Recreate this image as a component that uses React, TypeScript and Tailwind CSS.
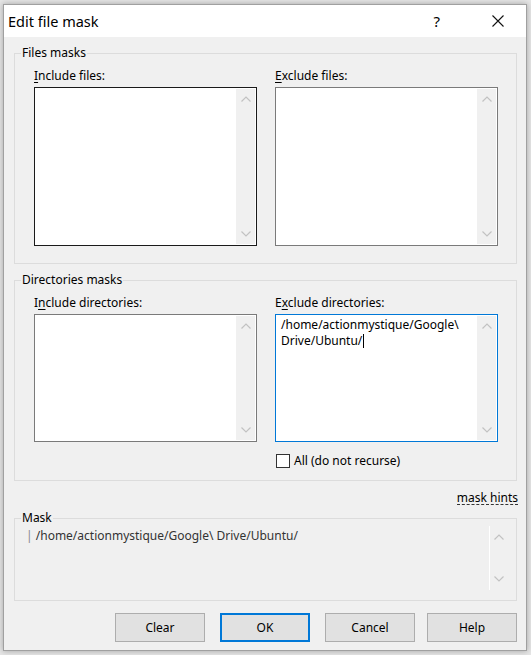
import type { ReactNode } from 'react'

const font = { fontFamily: '"Noto Sans", "Open Sans", Arial, sans-serif' }

function Chevron({ up }: { up?: boolean }) {
  return (
    <svg width="10" height="6" viewBox="0 0 10 6" fill="none" stroke="#c2c2c2" strokeWidth="1.2">
      <polyline points={up ? '0.5,5.5 5,1 9.5,5.5' : '0.5,0.5 5,5 9.5,0.5'} />
    </svg>
  )
}

function VScroll() {
  return (
    <div className="w-[19px] bg-[#f0f0f0] my-px mr-px flex flex-col items-center justify-between py-[7px]">
      <Chevron up />
      <Chevron />
    </div>
  )
}

interface ListBoxProps {
  label: ReactNode
  height: string
  border: string
  children?: ReactNode
}

function ListBox({ label, height, border, children }: ListBoxProps) {
  return (
    <div className="flex flex-col">
      <div className="h-[16px] leading-[16px] mb-[3px]">{label}</div>
      <div className={`${height} ${border} bg-white flex`}>
        <div className="flex-1 pl-[5px] pt-[2px] leading-[16px] text-black">{children}</div>
        <VScroll />
      </div>
    </div>
  )
}

function Group({ title, children, className }: { title: string; children: ReactNode; className?: string }) {
  return (
    <fieldset className={`w-[503px] border border-[#dcdcdc] ${className ?? ''}`}>
      <legend className="ml-[6px] px-px h-[16px] leading-[16px]">{title}</legend>
      {children}
    </fieldset>
  )
}

function Btn({ children, primary, className }: { children: ReactNode; primary?: boolean; className?: string }) {
  return (
    <button
      className={`w-[90px] h-[29px] bg-[#e1e1e1] text-black leading-none ${
        primary ? 'border-2 border-[#0078d7]' : 'border border-[#adadad]'
      } ${className ?? ''}`}
    >
      {children}
    </button>
  )
}

export default function App() {
  return (
    <div className="w-[531px] h-[655px] overflow-hidden bg-[#e6e6e6] pt-[4px] pl-[3px] text-[12px] text-black" style={font}>
      <div className="w-[524px] h-[647px] bg-[#f0f0f0] border border-[#a0a0a0] shadow-[0_0_6px_rgba(0,0,0,0.3)] flex flex-col">
        {/* title bar */}
        <div className="h-[32px] bg-white flex items-center shrink-0">
          <span className="pl-[4px] text-[14.5px] leading-none">Edit file mask</span>
          <span className="ml-auto mr-[52px] text-[15px] leading-none">?</span>
          <svg width="12" height="12" viewBox="0 0 12 12" className="mr-[22px]" stroke="#111" strokeWidth="1.1">
            <path d="M0.5 0.5 L11.5 11.5 M11.5 0.5 L0.5 11.5" />
          </svg>
        </div>

        <div className="pl-[10px] pt-[8px] flex flex-col">
          <Group title="Files masks">
            <div className="grid grid-cols-[223px_223px] gap-x-[18px] pl-[19px] pt-[7px] pb-[17px]">
              <ListBox
                height="h-[159px]"
                border="border border-[#1a1a1a]"
                label={
                  <>
                    <span className="underline underline-offset-2">I</span>nclude files:
                  </>
                }
              />
              <ListBox
                height="h-[159px]"
                border="border border-[#7a7a7a]"
                label={
                  <>
                    <span className="underline underline-offset-2">E</span>xclude files:
                  </>
                }
              />
            </div>
          </Group>

          <Group title="Directories masks" className="mt-[8px]">
            <div className="grid grid-cols-[223px_223px] gap-x-[18px] pl-[19px] pt-[7px] pb-[12px]">
              <ListBox
                height="h-[128px]"
                border="border border-[#7a7a7a]"
                label={
                  <>
                    I<span className="underline underline-offset-2">n</span>clude directories:
                  </>
                }
              />
              <div className="flex flex-col">
                <ListBox
                  height="h-[128px]"
                  border="border border-[#0078d7]"
                  label={
                    <>
                      E<span className="underline underline-offset-2">x</span>clude directories:
                    </>
                  }
                >
                  <div>/home/actionmystique/Google\</div>
                  <div className="flex items-center">
                    Drive/Ubuntu/<span className="inline-block w-px h-[14px] bg-black ml-px" />
                  </div>
                </ListBox>
                <label className="mt-[12px] flex items-center h-[14px]">
                  <span className="w-[14px] h-[14px] border border-[#333] bg-white ml-px" />
                  <span className="ml-[4px] leading-[16px]">All (do not recurse)</span>
                </label>
              </div>
            </div>
          </Group>

          <div className="w-[503px] flex justify-end pt-[9px] pb-[4px] h-[29px]">
            <span className="leading-[16px] border-b border-dashed border-[#333] h-[15px] -mr-px">mask hints</span>
          </div>

          <Group title="Mask">
            <div className="flex pl-[11px] pb-[10px]">
              <div className="flex-1 pt-[2px] leading-[16px] text-[#333]">
                <span className="text-[#888]">|</span> /home/actionmystique/Google\ Drive/Ubuntu/
              </div>
              <div className="w-[18px] h-[64px] border-l border-white flex flex-col items-center justify-between py-[8px] mr-[9px]">
                <Chevron up />
                <Chevron />
              </div>
            </div>
          </Group>

          <div className="w-[503px] flex justify-end mt-[12px]">
            <Btn className="mr-[15px]">Clear</Btn>
            <Btn primary className="mr-[15px]">OK</Btn>
            <Btn className="mr-[12px]">Cancel</Btn>
            <Btn>Help</Btn>
          </div>
        </div>
      </div>
    </div>
  )
}
